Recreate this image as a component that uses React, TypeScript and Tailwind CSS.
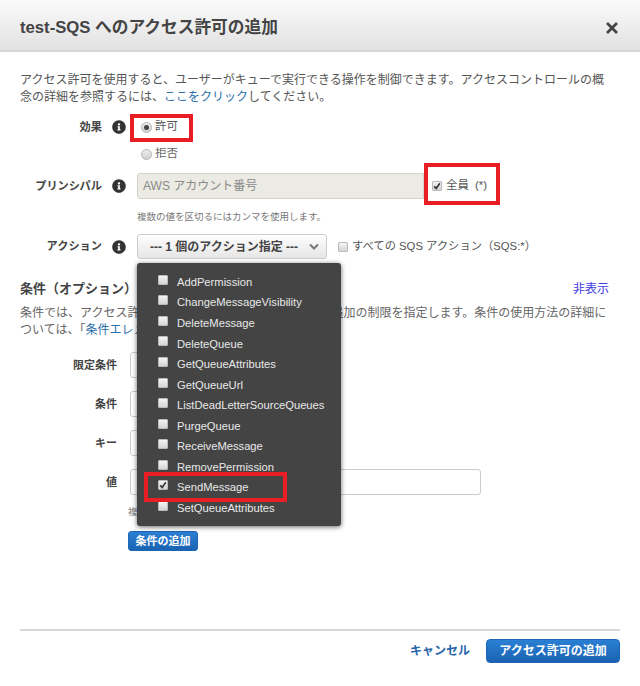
import React from 'react';
import { FaInfoCircle } from 'react-icons/fa';

const actions = [
  'AddPermission',
  'ChangeMessageVisibility',
  'DeleteMessage',
  'DeleteQueue',
  'GetQueueAttributes',
  'GetQueueUrl',
  'ListDeadLetterSourceQueues',
  'PurgeQueue',
  'ReceiveMessage',
  'RemovePermission',
  'SendMessage',
  'SetQueueAttributes',
];

const Info = () => <FaInfoCircle size={14} className="shrink-0 text-[#333]" />;

const Check = ({ checked = false }: { checked?: boolean }) => (
  <span className="flex h-[10px] w-[10px] shrink-0 items-center justify-center rounded-[1px] border border-[#bbb] bg-gradient-to-b from-[#f4f4f4] to-[#d4d4d4]">
    {checked && (
      <svg viewBox="0 0 10 10" className="h-[8px] w-[8px]">
        <path d="M1.5 5.5 L4 8 L8.5 1.5" fill="none" stroke="#333" strokeWidth="2" />
      </svg>
    )}
  </span>
);

const Radio = ({ checked = false }: { checked?: boolean }) => (
  <span className="flex h-[11px] w-[11px] shrink-0 items-center justify-center rounded-full border border-[#b5b5b5] bg-gradient-to-b from-[#eee] to-[#d0d0d0]">
    {checked && <span className="h-[5px] w-[5px] rounded-full bg-[#444]" />}
  </span>
);

const RedBox = ({ className }: { className: string }) => (
  <span className={`pointer-events-none absolute border-[4px] border-[#ea1c24] ${className}`} />
);

const ConditionRow = ({ label, wide = false }: { label: string; wide?: boolean }) => (
  <div className="flex h-[26px] items-center">
    <label className="w-[97px] text-right text-[11px] font-bold text-[#444]">{label}</label>
    <div className={`ml-[13px] h-[26px] rounded-[3px] border border-[#ccc] bg-white ${wide ? 'w-[351px]' : 'w-[180px]'}`} />
  </div>
);

const App = () => {
  return (
    <div className="relative flex h-[686px] w-[640px] flex-col overflow-hidden bg-white font-['Liberation_Sans','Noto_Sans_CJK_JP',sans-serif] text-[13px] text-[#555]">
      {/* Header */}
      <div className="flex h-[52px] shrink-0 items-center justify-between border-b-2 border-[#d5d5d5] bg-gradient-to-b from-[#fbfbfb] to-[#e2e2e2] pl-5 pr-[21px] pt-[5px]">
        <h1 className="text-[16.7px] font-bold text-[#444]">test-SQS へのアクセス許可の追加</h1>
        <svg viewBox="0 0 14 14" className="h-[14px] w-[14px]">
          <path d="M2 2 L12 12 M12 2 L2 12" stroke="#444" strokeWidth="2.8" fill="none" />
        </svg>
      </div>

      {/* Body */}
      <div className="flex flex-1 flex-col px-5 pt-5">
        <p className="w-[595px] text-[12px] leading-[17px]">
          アクセス許可を使用すると、ユーザーがキューで実行できる操作を制御できます。アクセスコントロールの概念の詳細を参照するには、
          <span className="text-[#2a6fa8]">ここをクリック</span>
          してください。
        </p>

        {/* Effect */}
        <div className="mt-[11px] flex h-5 items-center">
          <label className="w-[82px] text-right text-[11.2px] font-bold text-[#444]">効果</label>
          <span className="ml-[10px] mr-[11px]"><Info /></span>
          <div className="relative flex items-center gap-[3px] pl-[4px]">
            <Radio checked />
            <span className="text-[11.5px]">許可</span>
            <RedBox className="-left-[7px] -top-[4px] h-[28px] w-[63px]" />
          </div>
        </div>
        <div className="mt-[7px] flex h-5 items-center gap-[3px] pl-[121px]">
          <Radio />
          <span className="text-[11.5px] text-[#666]">拒否</span>
        </div>

        {/* Principal */}
        <div className="mt-[9px] flex h-[26px] items-center">
          <label className="w-[82px] text-right text-[11.2px] font-bold text-[#444]">プリンシパル</label>
          <span className="ml-[10px] mr-[11px]"><Info /></span>
          <div className="flex h-[26px] w-[287px] items-center rounded-l-[3px] border border-[#d4d4cc] bg-[#ebebe4] pl-[5px] text-[12px] text-[#8a8a8a]">
            AWS アカウント番号
          </div>
          <div className="relative ml-[8px] flex items-center gap-[4px]">
            <Check checked />
            <span className="text-[11.5px] text-[#555]">全員</span>
            <span className="ml-[2px] text-[11.5px] text-[#555]">(*)</span>
            <RedBox className="-left-[8px] -top-[14px] h-[42px] w-[76px]" />
          </div>
        </div>
        <p className="mt-[11px] h-[14px] pl-[117px] text-[9.5px] leading-[14px] text-[#777]">複数の値を区切るにはカンマを使用します。</p>

        {/* Action */}
        <div className="mt-[10px] flex h-[25px] items-center">
          <label className="w-[82px] text-right text-[11.2px] font-bold text-[#444]">アクション</label>
          <span className="ml-[10px] mr-[11px]"><Info /></span>
          <div className="relative z-10">
            <button className="flex h-[25px] w-[190px] items-center justify-between rounded-[3px] border border-[#ccc] bg-gradient-to-b from-[#fefefe] to-[#e6e6e6] pl-[12px] pr-[7px] text-[12px] font-bold text-[#444]">
              <span>--- 1 個のアクション指定 ---</span>
              <svg viewBox="0 0 10 7" className="h-[7px] w-[10px]">
                <path d="M1 1.5 L5 5.5 L9 1.5" fill="none" stroke="#777" strokeWidth="2" />
              </svg>
            </button>
            {/* Dropdown */}
            <div className="absolute left-0 top-[29px] flex h-[263px] w-[204px] flex-col rounded-[3px] bg-[#444] pt-[9px] shadow-[0_1px_5px_rgba(0,0,0,0.6)]">
              {actions.map((name) => (
                <div key={name} className="flex h-[20.55px] items-center pl-[21px] text-[11.2px] text-[#e8e8e8]">
                  <span className="-mt-[5px]"><Check checked={name === 'SendMessage'} /></span>
                  <span className="ml-[9px]">{name}</span>
                </div>
              ))}
              <RedBox className="left-[7px] top-[209px] h-[30px] w-[143px]" />
            </div>
          </div>
          <div className="ml-[11px] flex items-center gap-[4px]">
            <Check />
            <span className="text-[11.3px] text-[#555]">すべての SQS アクション（SQS:*）</span>
          </div>
        </div>

        {/* Conditions */}
        <div className="mt-5 flex h-5 items-center justify-between pr-[11px]">
          <h2 className="text-[13px] font-bold text-[#444]">条件（オプション）</h2>
          <span className="text-[12px] text-[#3b3bdd]">非表示</span>
        </div>
        <p className="mt-[6px] w-[595px] text-[12px] leading-[17px] text-[#666]">
          条件では、アクセス許可ステートメントが適用される時に追加の制限を指定します。条件の使用方法の詳細については、「
          <span className="text-[#2a6fa8]">条件エレメント</span>
          」を参照してください。
        </p>
        <div className="mt-[13px] flex flex-col gap-[13px]">
          <ConditionRow label="限定条件" />
          <ConditionRow label="条件" />
          <ConditionRow label="キー" />
          <ConditionRow label="値" wide />
        </div>
        <p className="mt-[10px] h-[14px] pl-[108px] text-[9.5px] leading-[14px] text-[#777]">複数の値を区切るにはカンマを使用します。</p>
        <div className="mt-[12px] pl-[108px]">
          <button className="h-[20px] w-[70px] rounded-[3px] border border-[#1c66b4] bg-gradient-to-b from-[#2b80d4] to-[#1a62b2] text-[11px] font-bold text-white">
            条件の追加
          </button>
        </div>

        {/* Footer */}
        <div className="mt-auto mb-[23px] border-t-2 border-[#d8d8d8] pt-[8px]">
          <div className="flex items-center justify-end gap-[16px]">
            <span className="text-[12px] font-bold text-[#2a66aa]">キャンセル</span>
            <button className="h-[24px] w-[134px] rounded-[4px] border border-[#1c66b4] bg-gradient-to-b from-[#2b80d4] to-[#1a62b2] text-[12px] font-bold text-white">
              アクセス許可の追加
            </button>
          </div>
        </div>
      </div>
    </div>
  );
};

export default App;
